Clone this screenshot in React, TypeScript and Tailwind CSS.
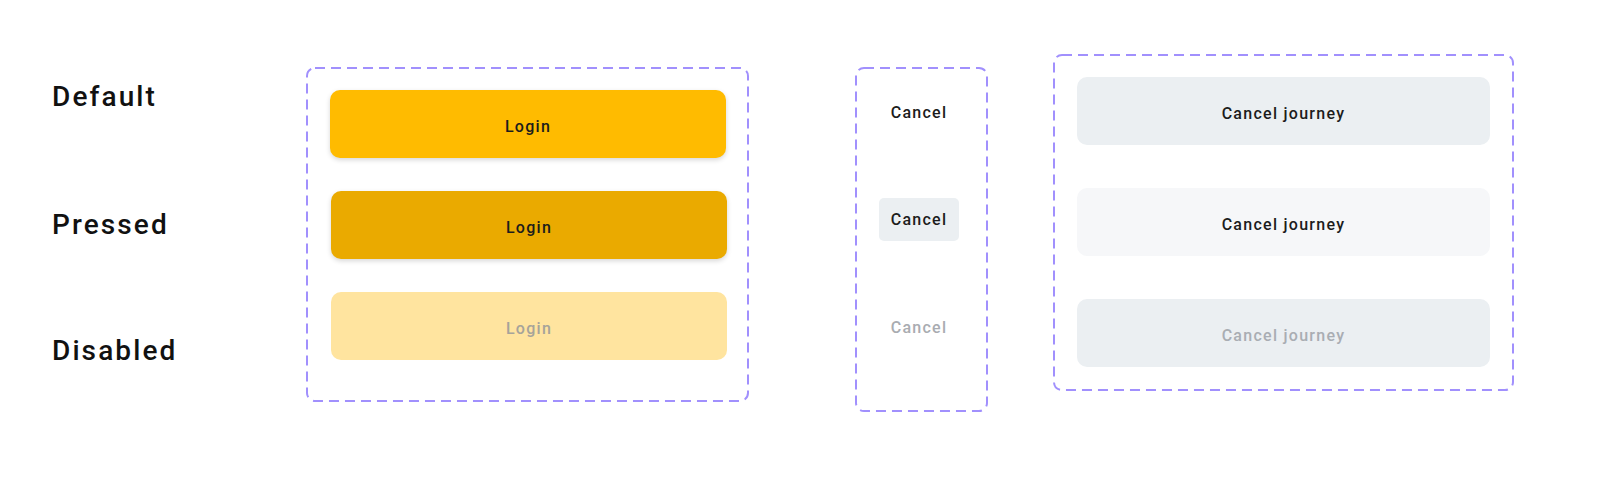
import React from "react";

function DashedBox({
  w,
  h,
  className,
  children,
}: {
  w: number;
  h: number;
  className: string;
  children: React.ReactNode;
}) {
  return (
    <div className={"relative shrink-0 " + className}>
      <svg
        className="absolute inset-0 pointer-events-none"
        width={w}
        height={h}
        viewBox={`0 0 ${w} ${h}`}
      >
        <rect
          x={1}
          y={1}
          width={w - 2}
          height={h - 2}
          rx={8}
          ry={8}
          fill="none"
          stroke="#A190FD"
          strokeWidth={2}
          strokeDasharray="10 6"
        />
      </svg>
      {children}
    </div>
  );
}

export default function App() {
  return (
    <div className="w-[1608px] h-[480px] bg-white flex items-start pl-[52px] font-['Roboto',sans-serif] font-medium text-[#1c1c1c]">
      {/* Labels */}
      <div className="w-[254px] shrink-0 flex flex-col pt-[81px] text-[28px] leading-[32px] tracking-[2.1px] text-[#111111]">
        <div>Default</div>
        <div className="mt-[96px]">Pressed</div>
        <div className="mt-[94px]">Disabled</div>
      </div>

      {/* Primary buttons */}
      <DashedBox w={443} h={335} className="w-[443px] h-[335px] mt-[67px]">
        <div className="flex flex-col gap-[33px] pt-[23px] pl-[24px] text-[16px] tracking-[0.08em]">
          <div className="w-[396px] h-[68px] pt-[6px] rounded-[10px] bg-[#FFBB00] flex items-center justify-center shadow-[0_2px_5px_rgba(0,0,0,0.16)]">
            Login
          </div>
          <div className="w-[396px] h-[68px] pt-[6px] ml-[1px] rounded-[10px] bg-[#EAAA00] flex items-center justify-center shadow-[0_2px_5px_rgba(0,0,0,0.16)]">
            Login
          </div>
          <div className="w-[396px] h-[68px] pt-[6px] ml-[1px] rounded-[10px] bg-[#FFE49F] flex items-center justify-center text-[#A6A39A]">
            Login
          </div>
        </div>
      </DashedBox>

      {/* Text buttons */}
      <DashedBox w={133} h={345} className="w-[133px] h-[345px] mt-[67px] ml-[106px]">
        <div className="flex flex-col gap-[64px] pt-[24px] pl-[24px] text-[16px] tracking-[0.08em]">
          <div className="w-[80px] h-[43px] rounded-[5px] flex items-center justify-center">
            Cancel
          </div>
          <div className="w-[80px] h-[43px] pt-[1px] rounded-[5px] bg-[#EBEFF2] flex items-center justify-center">
            Cancel
          </div>
          <div className="w-[80px] h-[43px] pt-[3px] rounded-[5px] flex items-center justify-center text-[#A9ACB1]">
            Cancel
          </div>
        </div>
      </DashedBox>

      {/* Secondary buttons */}
      <DashedBox w={461} h={337} className="w-[461px] h-[337px] mt-[54px] ml-[65px]">
        <div className="flex flex-col gap-[43px] pt-[23px] pl-[24px] text-[16px] tracking-[0.08em]">
          <div className="w-[413px] h-[68px] pt-[5px] rounded-[10px] bg-[#EBEFF2] flex items-center justify-center">
            Cancel journey
          </div>
          <div className="w-[413px] h-[68px] pt-[5px] rounded-[10px] bg-[#F6F7F9] flex items-center justify-center">
            Cancel journey
          </div>
          <div className="w-[413px] h-[68px] pt-[5px] rounded-[10px] bg-[#EBEFF2] flex items-center justify-center text-[#A9ADB3]">
            Cancel journey
          </div>
        </div>
      </DashedBox>
    </div>
  );
}
